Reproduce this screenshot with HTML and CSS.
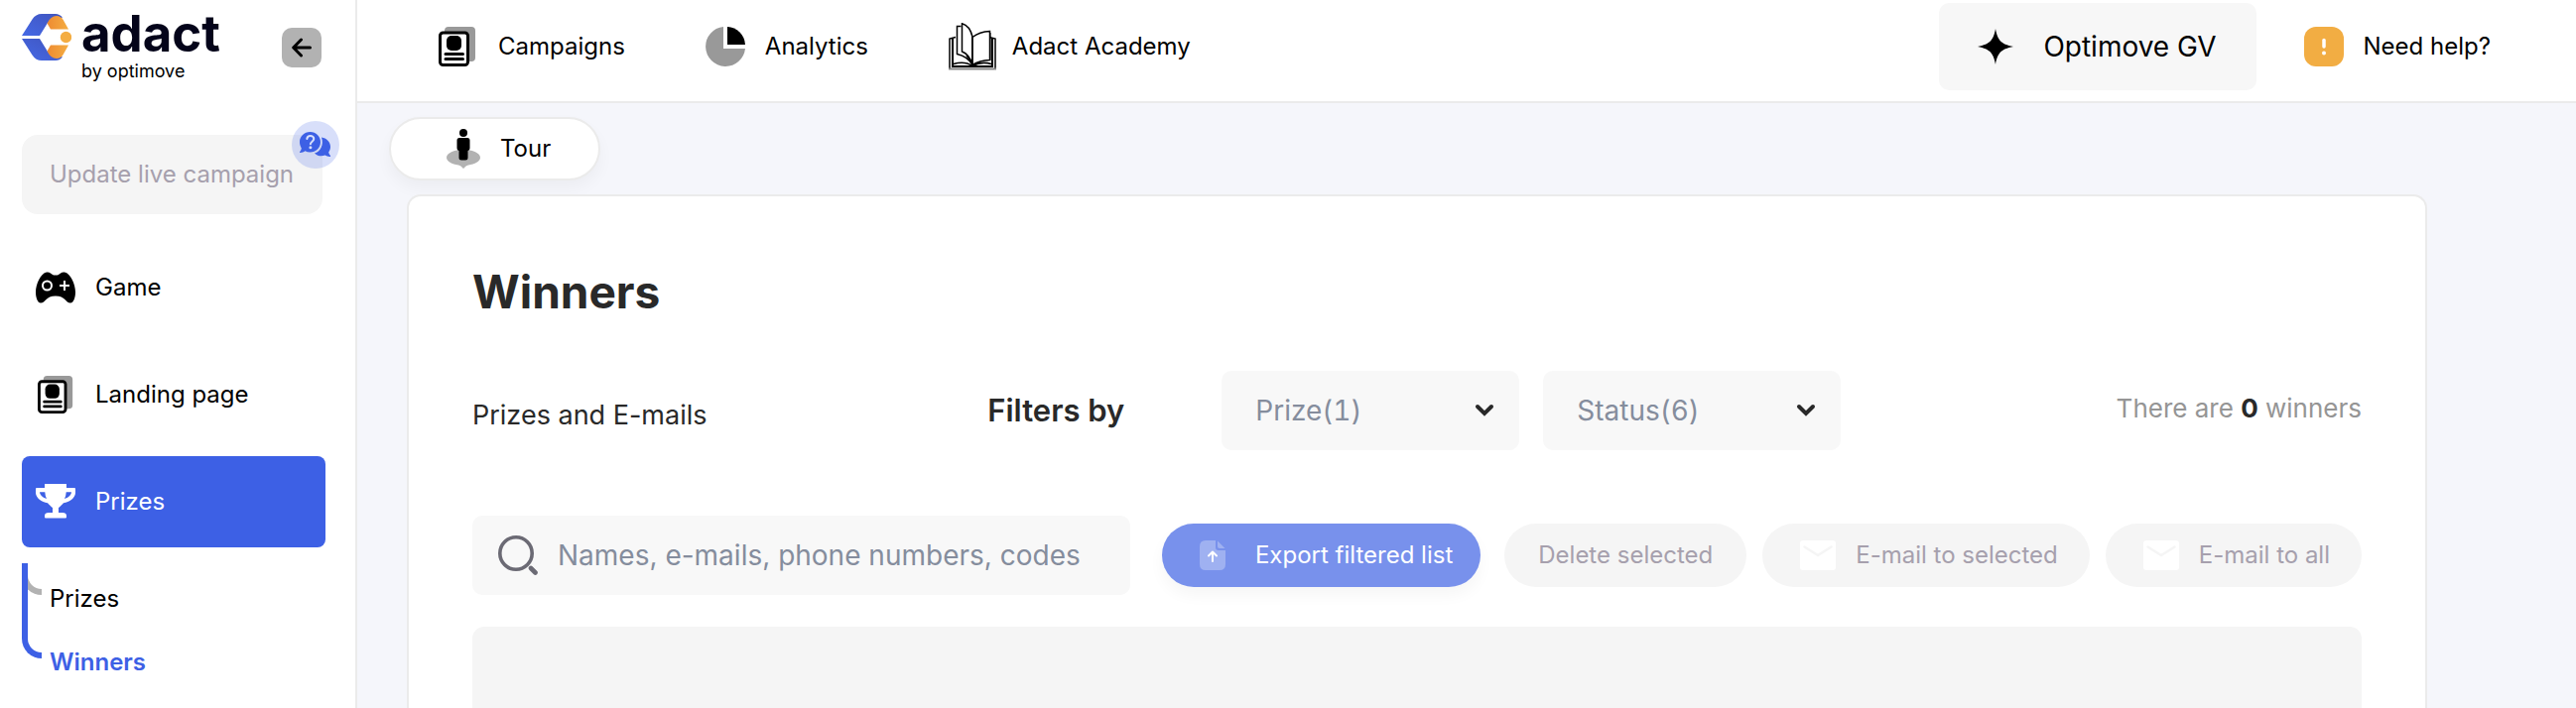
FILE: index.html
```html
<!DOCTYPE html>
<html lang="en">
<head>
<meta charset="utf-8">
<meta name="viewport" content="width=device-width, initial-scale=1">
<title>Winners – adact</title>
<link rel="stylesheet" href="styles.css">
</head>
<body>
<svg class="sprite" aria-hidden="true">
  <symbol id="i-page" viewBox="0 0 40 40">
    <path fill="#999" d="M10 0h23a4 4 0 0 1 4 4v27a4 4 0 0 1-4 4H10a4 4 0 0 1-4-4V4a4 4 0 0 1 4-4z"/>
    <rect x="1.500" y="6" width="28" height="32.500" rx="3" fill="#fff" stroke="#000" stroke-width="3"/>
    <rect x="8" y="9" width="15" height="15" rx="5" fill="#000"/>
    <path d="M7 27.500h17.500M7 32.500h17.500" stroke="#000" stroke-width="3" stroke-linecap="round"/>
  </symbol>
  <symbol id="i-mail" viewBox="0 0 36 30">
    <rect width="36" height="30" rx="3" fill="#fff"/>
    <path d="M4.500 6.500 18 15 31.500 6.500" fill="none" stroke="#f5f5f5" stroke-width="2.500" stroke-linecap="round"/>
  </symbol>
  <symbol id="i-chevron" viewBox="0 0 20 14">
    <path d="M3 3l7 7 7-7" fill="none" stroke="#292929" stroke-width="4" stroke-linecap="round"/>
  </symbol>
</svg>
<div class="app">
  <aside class="sidebar">
    <div class="brand">
      <a class="logo" href="#">
        <svg class="logo-mark" viewBox="0 0 50 47" aria-hidden="true">
          <defs>
            <linearGradient id="blue" x1="1" y1="0" x2="0" y2="1"><stop offset="0" stop-color="#4054bd"/><stop offset="1" stop-color="#4569e6"/></linearGradient>
            <linearGradient id="amber" x1="0" y1="0" x2="1" y2="0"><stop offset="0" stop-color="#ee8b32"/><stop offset="1" stop-color="#f4ad42"/></linearGradient>
          </defs>
          <path fill="url(#blue)" d="M0 22 10.500 5.500Q14 0 20 0h14q4 0 7 3.500L26 9 18 22z"/>
          <path fill="url(#blue)" d="M0 25 10.500 41.500Q14 47 20 47h14q4 0 7-3.500L26 38 18 25z"/>
          <path fill="url(#amber)" d="M25.500 9.500Q29 2 35 2q4.500 0 7 4.500l5 9H29z"/>
          <path fill="url(#amber)" d="M25.500 37.500Q29 45 35 45q4.500 0 7-4.500l5-9H29z"/>
          <circle cx="44.500" cy="23.500" r="5.700" fill="#f4ad42"/>
        </svg>
        <span class="logo-text"><span class="logo-name">adact</span><span class="logo-by">by optimove</span></span>
      </a>
      <button class="collapse" type="button" aria-label="Collapse menu">
        <svg width="20" height="20" viewBox="0 0 20 20" aria-hidden="true"><path d="M18.500 10H2M9.500 2 1.700 10l7.800 8" fill="none" stroke="#000" stroke-width="3" stroke-linecap="round" stroke-linejoin="round"/></svg>
      </button>
    </div>
    <div class="update">
      <button class="update-button" type="button" disabled>Update live campaign</button>
      <button class="chat-badge" type="button" aria-label="Ask a question">
        <svg width="32" height="26" viewBox="0 0 32 26" aria-hidden="true">
          <path fill="#3d60e5" d="M22 5.500C27 6.300 31 10 31 15c0 2.300-.7 4-1.800 5.500.2 1.500 1 2.500 1.800 3.500.3.700 0 1-.6 1-2 0-3.500-.6-4.800-1.400-3.600 1.300-7.600.9-10.600-2.100C21 20 24.500 13 22 5.500z"/>
          <path fill="#3d60e5" d="M10.500 0C16.500 0 21 4.500 21 10.200S16.500 20.500 10.500 20.500c-1.900 0-3.600-.4-5-1.200C4 20.300 2.500 21 .7 21c-.6 0-.9-.5-.5-1 .8-1 1.400-2.100 1.600-3.600C.7 14.700 0 12.500 0 10.200 0 4.500 4.700 0 10.500 0z"/>
          <path d="M7.300 7c.3-2 1.700-3 3.500-3s3.500 1.200 3.500 3c0 2.500-3.400 2.800-3.400 5.200" fill="none" stroke="#d8dffa" stroke-width="2" stroke-linecap="round"/><circle cx="10.900" cy="15.800" r="1.500" fill="#d8dffa"/>
        </svg>
      </button>
    </div>
    <nav class="side-nav" aria-label="Campaign">
      <a class="side-link" href="#">
        <svg width="40" height="40" viewBox="0 0 40 40" aria-hidden="true">
          <path d="M11 4.500c3-.5 4.500 1.500 6 2.500 1 .7 5 .7 6 0 1.500-1 3-3 6-2.500 6 1 11 12 11 20 0 6-2 11-5 11-5 0-5-7-15-7s-10 7-15 7c-3 0-5-5-5-11 0-8 5-19 11-20z"/>
          <circle cx="11.500" cy="18" r="4.500" fill="none" stroke="#fff" stroke-width="2"/><path d="M29 13v10M24 18h10" stroke="#fff" stroke-width="2"/>
        </svg>Game</a>
      <a class="side-link" href="#"><svg class="page-icon" width="40" height="40" aria-hidden="true"><use href="#i-page"/></svg>Landing page</a>
      <a class="side-link side-link-active" href="#">
        <svg width="40" height="36" viewBox="0 0 40 36" fill="#fff" aria-hidden="true">
          <path d="M9 0h22v4h8q1 0 1 1v4c0 5-6 9.500-12 10.300-2 2.200-4 4-5 4.700v5h4c2.500 0 4 1 4 3v1.500q0 1-1 1H10q-1 0-1-1V32c0-2 1.500-3 4-3h4v-5c-1-.7-3-2.500-5-4.700C6 18.500 0 14 0 9V5q0-1 1-1h8z"/>
          <path fill="#3d60e5" d="M4 8.300h5.300q.2 4 1.700 6.800Q4 12.500 4 8.300zM36 8.300h-5.300q-.2 4-1.700 6.800 7-2.600 7-6.800z"/>
        </svg>Prizes</a>
      <ul class="sub-nav">
        <li class="sub-item"><a href="#">Prizes</a></li>
        <li class="sub-item sub-item-active"><a href="#">Winners</a></li>
      </ul>
    </nav>
  </aside>
  <div class="content">
    <header class="topbar">
      <nav class="top-nav" aria-label="Main">
        <a class="top-link" href="#"><svg width="40" height="40" aria-hidden="true"><use href="#i-page"/></svg>Campaigns</a>
        <a class="top-link" href="#">
          <svg width="40" height="40" viewBox="0 0 40 40" aria-hidden="true"><path fill="#999" d="M18 0v22h22A20 20 0 1 1 18 0z"/><path d="M22 0v18h18A19 19 0 0 0 22 0z"/></svg>Analytics</a>
        <a class="top-link top-link-book" href="#">
          <svg width="48" height="48" viewBox="0 0 48 48" fill="none" stroke="#000" stroke-width="1.500" aria-hidden="true">
            <path d="M7 14.500 1 16v30.500" /><path d="M41 14.500 47 16v30.500"/>
            <path d="M0 46.500h48" stroke="#888" stroke-width="2"/>
            <path d="M4 16v28h40V16" stroke-width="2"/>
            <path d="M12.500 3.500H8.500V31.500C15 33 21 37 24 42.500"/>
            <path d="M13.500.8V29C19 31 22 36 24 42V14C22 6 18 2 13.500.8z" fill="#fff"/>
            <path d="M24 14.500Q31 9 41.500 8.500V37.500Q31 38 24 42.500z" fill="#fff"/>
            <path d="M42 10v28M24 14v29" stroke-width="1"/>
            <path d="M5 41.500Q16 38 24 43.500 33 38.500 43 41.500M18 33Q22 37 24 42" />
          </svg>Adact Academy</a>
      </nav>
      <button class="workspace" type="button">
        <svg width="36" height="36" viewBox="0 0 36 36" aria-hidden="true"><path d="M18 0c2 11 5 15.500 18 18-13 2.500-16 7-18 18-2-11-5-15.500-18-18C13 15.500 16 11 18 0z"/></svg>Optimove GV</button>
      <a class="top-link help" href="#">
        <svg width="40" height="40" viewBox="0 0 40 40" aria-hidden="true"><rect width="40" height="40" rx="12" fill="#f2ad43"/><path d="M20 13.500v6.500" stroke="#fff" stroke-width="3.500" stroke-linecap="round"/><circle cx="20" cy="26.500" r="2" fill="#fff"/></svg>Need help?</a>
    </header>
    <main class="main">
      <button class="tour" type="button">
        <svg width="34" height="40" viewBox="0 0 34 40" aria-hidden="true"><path fill="#b2b2b2" d="M17 21c9.500 0 17 3.500 17 8 0 3.700-5.500 6.500-12 7.400q-2.300.3-3.500 2.200-1.500 2.400-3 0-1.200-1.900-3.500-2.200C5.500 35.500 0 32.700 0 29c0-4.500 7.500-8 17-8z"/><circle cx="17" cy="4" r="4"/><path d="M13 9h8q2.500 0 2.500 2.500v8q0 2-2 2.500v7q0 2.500-2.500 2.500h-4q-2.500 0-2.500-2.500v-7q-2-.5-2-2.500v-8Q10.500 9 13 9z"/></svg>Tour</button>
      <section class="card">
        <h1 class="title">Winners</h1>
        <div class="filter-row">
          <p class="subtitle">Prizes and E-mails</p>
          <div class="filters">
            <h2 class="filters-label">Filters by</h2>
            <div class="select">
              <select aria-label="Prize"><option>Prize(1)</option></select>
              <svg width="20" height="14" aria-hidden="true"><use href="#i-chevron"/></svg>
            </div>
            <div class="select">
              <select aria-label="Status"><option>Status(6)</option></select>
              <svg width="20" height="14" aria-hidden="true"><use href="#i-chevron"/></svg>
            </div>
            <p class="count">There are <strong>0</strong> winners</p>
          </div>
        </div>
        <div class="action-row">
          <label class="search">
            <svg width="40" height="40" viewBox="0 0 40 40" fill="none" stroke="#6b6a74" aria-hidden="true"><circle cx="18" cy="18" r="16.200" stroke-width="3.600"/><path d="M33 33l4.500 4.500" stroke-width="4.600" stroke-linecap="round"/></svg>
            <input type="text" placeholder="Names, e-mails, phone numbers, codes" aria-label="Search winners">
          </label>
          <div class="actions">
            <button class="pill pill-primary" type="button">
              <svg width="26" height="30" viewBox="0 0 26 30" aria-hidden="true"><path fill="#9fb1f1" d="M6 0h10v7q0 3 3 3h7v14q0 6-6 6H6q-6 0-6-6V6q0-6 6-6z"/><path fill="#9fb1f1" d="M18 .5 25.500 8H20q-2 0-2-2z"/><path d="M13 21v-9M9 15.500l4-4 4 4" fill="none" stroke="#fff" stroke-width="2" stroke-linecap="round" stroke-linejoin="round"/></svg>Export filtered list</button>
            <button class="pill pill-delete" type="button" disabled>Delete selected</button>
            <button class="pill" type="button" disabled><svg width="36" height="30" aria-hidden="true"><use href="#i-mail"/></svg>E-mail to selected</button>
            <button class="pill" type="button" disabled><svg width="36" height="30" aria-hidden="true"><use href="#i-mail"/></svg>E-mail to all</button>
          </div>
        </div>
        <div class="results"></div>
      </section>
    </main>
  </div>
</div>
</body>
</html>
```
FILE: styles.css
```css
*,
*::before {
  box-sizing: border-box;
}

body {
  margin: 0;
  font-family: Inter, "Liberation Sans", sans-serif;
  font-size: 24px;
  line-height: 32px;
  color: #000;
  background: #f5f6fb;
}

h1,
h2,
p,
ul {
  margin: 0;
  padding: 0;
}

button,
input,
select {
  margin: 0;
  padding: 0;
  border: 0;
  font: inherit;
  color: inherit;
  background: none;
}

a {
  color: inherit;
  text-decoration: none;
}

svg {
  flex: none;
  display: block;
}

.sprite {
  position: absolute;
  width: 0;
  height: 0;
}

.app {
  display: flex;
  min-height: 100vh;
}

/* Sidebar */
.sidebar {
  flex: none;
  width: 360px;
  padding: 8px 30px 24px 22px;
  background: #fff;
  border-right: 2px solid #ebebeb;
}

.brand {
  display: flex;
  justify-content: space-between;
  height: 76px;
}

.logo {
  display: flex;
  gap: 10px;
}

.logo-mark {
  width: 50px;
  height: 47px;
  margin-top: 6px;
}

.logo-text {
  display: flex;
  flex-direction: column;
}

.logo-name {
  font-size: 51px;
  line-height: 52px;
  font-weight: 700;
  color: #04041a;
}

.logo-by {
  font-size: 18px;
  line-height: 24px;
}

.collapse {
  display: grid;
  place-items: center;
  width: 40px;
  height: 40px;
  margin: 20px 4px 0 0;
  border-radius: 10px;
  background: #b2b2b2;
}

.update {
  position: relative;
  margin: 52px 3px 28px 0;
}

.update-button {
  width: 100%;
  height: 80px;
  padding-left: 28px;
  border-radius: 16px;
  text-align: left;
  white-space: nowrap;
  color: #a6a0ad;
  background: #f5f5f5;
}

.chat-badge {
  position: absolute;
  top: -14px;
  right: -17px;
  display: grid;
  place-items: center;
  width: 48px;
  height: 48px;
  border-radius: 50%;
  background: rgba(61, 96, 229, 0.2);
}

.side-nav {
  display: flex;
  flex-direction: column;
  gap: 16px;
}

.side-link {
  display: flex;
  align-items: center;
  gap: 20px;
  height: 92px;
  padding-left: 14px;
  border-radius: 8px;
}

.page-icon {
  padding-left: 2px;
}

.side-link-active {
  color: #fff;
  background: #3d60e5;
}

.sub-nav {
  list-style: none;
}

.sub-item {
  position: relative;
  padding: 20px 0 12px 28px;
}

.sub-item::before {
  content: "";
  position: absolute;
  left: 0;
  bottom: 32px;
  width: 20px;
  height: 32px;
  border-left: 6px solid #b2b2b2;
  border-bottom: 6px solid #b2b2b2;
  border-bottom-left-radius: 20px;
}

.sub-item-active::before {
  z-index: 1;
  height: 96px;
  border-color: #3d60e5;
}

.sub-item-active {
  font-weight: 600;
  color: #3d60e5;
}

/* Top bar */
.content {
  flex: 1;
  min-width: 0;
  display: flex;
  flex-direction: column;
}

.topbar {
  display: flex;
  align-items: center;
  height: 104px;
  padding: 0 86px 8px 82px;
  background: #fff;
  border-bottom: 2px solid #ebebeb;
}

.top-nav {
  display: flex;
  gap: 81px;
  margin-right: auto;
}

.top-link {
  display: flex;
  align-items: center;
  gap: 20px;
  white-space: nowrap;
}

.top-link-book {
  gap: 16px;
}

.workspace {
  display: flex;
  align-items: center;
  justify-content: center;
  gap: 30px;
  min-width: 320px;
  height: 88px;
  border-radius: 10px;
  font-size: 28px;
  background: #f7f7f7;
}

.help {
  margin-left: 48px;
}

/* Page */
.main {
  flex: 1;
  display: flex;
  flex-direction: column;
  align-items: flex-start;
  padding: 14px 150px 0 32px;
}

.tour {
  display: flex;
  align-items: center;
  gap: 20px;
  height: 64px;
  padding: 0 48px 0 56px;
  border: 2px solid #ebebeb;
  border-radius: 32px;
  background: #fff;
  box-shadow: 0 8px 16px rgba(0, 0, 0, 0.04);
}

.card {
  flex: 1;
  align-self: stretch;
  display: flex;
  flex-direction: column;
  margin: 14px 0 0 18px;
  padding: 64px 64px 0;
  border: 2px solid #ebebeb;
  border-bottom: 0;
  border-radius: 14px 14px 0 0;
  color: #292929;
  background: #fff;
}

.title {
  font-size: 46px;
  line-height: 64px;
  font-weight: 700;
}

.filter-row {
  display: grid;
  grid-template-columns: 3fr 8fr;
  align-items: center;
  margin-top: 48px;
}

.subtitle {
  padding-top: 10px;
  font-size: 27px;
}

.filters {
  display: flex;
  align-items: center;
  gap: 24px;
}

.filters-label {
  width: 212px;
  font-size: 31px;
  font-weight: 600;
}

.select {
  display: grid;
  align-items: center;
  width: 300px;
}

.select select,
.select svg {
  grid-area: 1 / 1;
}

.select select {
  appearance: none;
  width: 100%;
  height: 80px;
  padding: 0 56px 0 34px;
  border-radius: 10px;
  font-size: 28px;
  font-variant-numeric: tabular-nums;
  color: #858d9d;
  background: #f8f8f8;
}

.select svg {
  justify-self: end;
  margin-right: 25px;
  pointer-events: none;
}

.count {
  margin-left: auto;
  padding-bottom: 4px;
  font-size: 26px;
  white-space: nowrap;
  color: #959595;
}

.count strong {
  color: #292929;
}

.action-row {
  display: flex;
  align-items: center;
  gap: 32px;
  margin-top: 66px;
}

.search {
  flex: 1;
  min-width: 0;
  display: flex;
  align-items: center;
  gap: 20px;
  height: 80px;
  padding: 0 26px;
  border-radius: 10px;
  background: #f8f8f8;
}

.search input {
  flex: 1;
  min-width: 0;
  height: 100%;
  font-size: 28px;
}

.search input::placeholder {
  color: #858d9d;
  opacity: 1;
}

.actions {
  display: flex;
  gap: 16px;
}

.pill {
  display: flex;
  align-items: center;
  justify-content: center;
  gap: 20px;
  height: 64px;
  padding: 0 32px 0 38px;
  border-radius: 32px;
  white-space: nowrap;
  color: #a6a0ad;
  background: #f5f5f5;
}

.pill-primary {
  gap: 30px;
  padding: 0 28px 0 38px;
  margin-right: 8px;
  color: #fff;
  background: #7891ec;
  box-shadow: 0 8px 16px rgba(0, 0, 0, 0.04);
}

.pill-delete {
  padding: 0 34px;
}

.results {
  flex: 1;
  min-height: 82px;
  margin-top: 32px;
  border-radius: 12px 12px 0 0;
  background: #f5f5f5;
}
```
